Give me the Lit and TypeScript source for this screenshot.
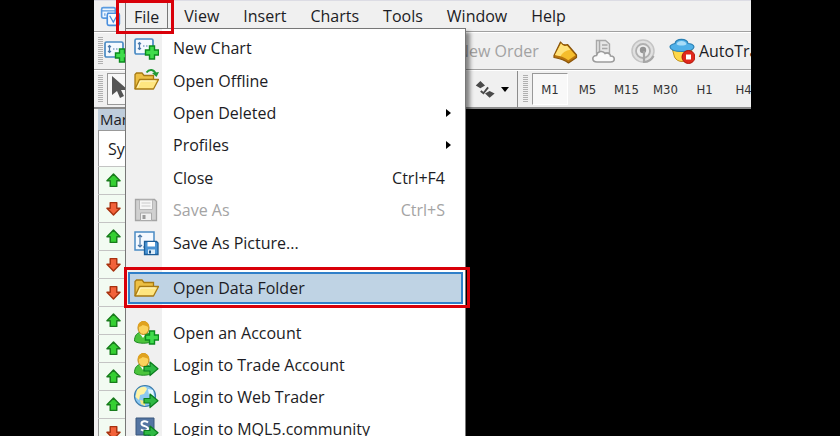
import { LitElement, html, svg, css, nothing } from "lit";
import { customElement } from "lit/decorators.js";
import { classMap } from "lit/directives/class-map.js";

const icon = (body: unknown, size = 26) =>
  html`<svg width=${size} height=${size} viewBox="0 0 26 26" aria-hidden="true">${body}</svg>`;

const plus = svg`<path d="M16.500 11h5v4h4v5h-4v4h-5v-4h-4v-5h4z" fill="#3fdc4c" stroke="#0b8a1e" stroke-width="1.400"/>`;
const arrow = svg`<path d="M11 14.500h6v-4.500l8 6.700-8 6.800v-4.500h-6z" fill="#2fb944" stroke="#0b7d1e" stroke-width="1.200" stroke-linejoin="round"/>`;
const user = svg`
  <path d="M1.500 21c0-5 2-9 8.500-9s9 4 9 9c-3 3-14.500 3-17.500 0z" fill="#4cc43c" stroke="#1f8a22"/>
  <path d="M6.500 13l3.500 5 3.500-5z" fill="#fff"/>
  <ellipse cx="10.500" cy="8" rx="5.500" ry="6.500" fill="#fbd25c" stroke="#bb8210"/>
  <path d="M5 8c-1.500-9 12.500-9 11 0-2-3-5.500-2-6.500-3-1 2-3.500 1-4.500 3z" fill="#e0a21f"/>`;
const folder = svg`
  <path d="M2 21V6.500l1.500-1.500H9l2 2.500h9.500V12" fill="#edc044" stroke="#a87a12" stroke-width="1.300"/>
  <path d="M2 21l4.500-9.500H25.500L20.500 21z" fill="#ffe680" stroke="#a87a12" stroke-width="1.300" stroke-linejoin="round"/>
  <path d="M4.500 19.500l3-6.500h15" fill="none" stroke="#fff6c8"/>`;

const icons: Record<string, unknown> = {
  newChart: svg`
    <rect x="2" y="4" width="18" height="15" rx="1.500" fill="#f4f9ff" stroke="#4a8bc4" stroke-width="1.700"/>
    <path d="M6.500 7.500v7M5 9l1.500-1.500L8 9M5 13l1.500 1.500L8 13M10 11h1.500M13 11h1.500" fill="none" stroke="#4a78a8" stroke-width="1.200"/>${plus}`,
  offline: svg`${folder}
    <path d="M13.500 4.500c3-4 7.500-3 9 1" fill="none" stroke="#219a35" stroke-width="2"/>
    <path d="M19 5l7-1-2.500 5z" fill="#219a35"/>`,
  folder,
  save: svg`
    <path d="M2.500 2.500h19l2 2v19h-21z" fill="#d0d0d0" stroke="#a4a4a4" stroke-width="1.300"/>
    <path d="M6.500 3h13v9.500h-13z" fill="#f6f6f6" stroke="#b8b8b8"/>
    <path d="M8.500 6h9M8.500 9h9" stroke="#cacaca"/>
    <path d="M7.500 16h11v7.500h-11z" fill="#f0f0f0" stroke="#aaa"/>
    <path d="M9.500 18h3v4h-3z" fill="#999"/>`,
  savePicture: svg`
    <path d="M2 2h19v18H2z" fill="#f4f9ff" stroke="#4a8bc4" stroke-width="1.500"/>
    <path d="M7 5v12M5 7l2-2 2 2M5 15l2 2 2-2M10 17h2" fill="none" stroke="#4a78a8" stroke-width="1.200"/>
    <path d="M11.500 11.500h12l1.500 1.500v11.500H11.500z" fill="#4a93d4" stroke="#1c5d97" stroke-width="1.300"/>
    <path d="M14.500 12h7.500v4.500h-7.500z" fill="#fff"/><path d="M15 19.500h7v4.500h-7z" fill="#dcecf8"/>
    <path d="M16 20.500h2v3h-2z" fill="#1c5387"/>`,
  account: svg`${user}${plus}`,
  login: svg`${user}${arrow}`,
  web: svg`
    <circle cx="12" cy="12" r="10.500" fill="#8cc8f2" stroke="#3c7cab" stroke-width="1.200"/>
    <path d="M4 6c4-4 9-4 10-1l-3 5-4 1-1 5-3.500-3z" fill="#fff3a4"/>
    <path d="M15 5l5 1 1 6-5-1z" fill="#e4f6ff"/><path d="M7 16l5 1v5l-4-2z" fill="#f4e98a"/>${arrow}`,
  community: svg`
    <path d="M3 2h18v17h-5l-4 4v-4H3z" fill="#5474a2" stroke="#3b567d"/>
    <path d="M15 6.500c-2-2-6.500-1.500-6.500 1.200 0 3 6.500 1.800 6.500 4.800 0 2.500-4.500 3-7 1" fill="none" stroke="#fff" stroke-width="2"/>${arrow}`,
  app: svg`
    <rect x="2" y="2" width="17" height="13" rx="2" fill="#eef6ff" stroke="#5b9be0" stroke-width="2"/>
    <path d="M2 6h17M6 9v3M10 8v4" stroke="#5b9be0" stroke-width="1.500"/>
    <rect x="9" y="9" width="15" height="15" rx="2" fill="#f7fbff" stroke="#4b8fdd" stroke-width="2"/>
    <path d="M12 12l4.500 8L21 12" fill="none" stroke="#4b8fdd" stroke-width="1.500"/>`,
  cursor: svg`<path d="M4 2v19l5-4 3 7 4-2-3-6h7z" fill="#555"/>`,
  book: svg`
    <path d="M2 17.500L8.500 4c2 3 4.500 3.500 7 2.500L24.500 17v2.500L16.500 25C13 22 8 20.500 2 19.500z" fill="#b8740e" stroke="#8a5508" stroke-width="1.200" stroke-linejoin="round"/>
    <path d="M3 17L9 5.500c2 2.500 4 3 6 2.200l8.500 9.600-7.200 5C13 19.500 9 18 3 17z" fill="#f5bd2c"/>
    <path d="M9 5.500c2 2.500 4 3 6 2.200l3.500 4c-5 .8-8.500 3-10 6.600L3 17z" fill="#ffe27a"/>`,
  server: svg`
    <path d="M5.500 2.500h9l4 3.500v9h-13z" fill="#e6e6e6" stroke="#a8a8a8" stroke-width="1.400"/>
    <path d="M8.500 3v10M11 7h5.500M11 10.500h5.500" stroke="#a8a8a8" stroke-width="1.500"/>
    <path d="M6 24c-5.500 0-5.500-6.500-.5-6.500 1-5 7-5 8.500-2 3-1.500 5.500.5 5.500 2.500 5 0 5 6 0 6z" fill="#fafafa" stroke="#9c9c9c" stroke-width="1.600"/>`,
  signal: svg`
    <circle cx="13" cy="13" r="11" fill="#e0e0e0" stroke="#c4c4c4" stroke-width="1.500"/>
    <circle cx="13" cy="13" r="7" fill="#ededed" stroke="#b0b0b0" stroke-width="1.800"/>
    <circle cx="13" cy="12" r="3.200" fill="#949494"/>
    <path d="M14 13v11c5 0 8-3 9.500-6" fill="none" stroke="#a6a6a6" stroke-width="2.200"/>`,
  auto: svg`
    <path d="M3 10l2.500 9c3 6 12 6 15 0l3-9z" fill="#ffd84a" stroke="#c0901a"/>
    <path d="M1 9c0-2 3-3 5-3.500C7 0 18 0 19 5.500c2 0 6 1 6 3.500-1 6-23 6-24 0z" fill="#4fb0e8" stroke="#2a80b4" stroke-width="1.200"/>
    <path d="M7.500 6c1-4 9-4 10 0-1 2-9 2-10 0z" fill="#a8ddf8"/>
    <circle cx="19.500" cy="19" r="6.500" fill="#e0281c" stroke="#b01408"/>
    <path d="M17 16.500h5v5h-5z" fill="#fff"/>`,
  nodes: svg`
    <path d="M1 8.500L7 2.500l6 6-6 3.500zM13 19l6-3.500 6.500 3.500-6.500 5.500z" fill="#4a4a4a"/>
    <path d="M7.500 15.500l3.500 3L17 11" fill="none" stroke="#4a4a4a" stroke-width="2.500"/>`,
  up: svg`<path d="M13 3l10 10.500h-5V22H8v-8.500H3z" fill="#35d032" stroke="#187c1c" stroke-width="2.200" stroke-linejoin="round"/>`,
  down: svg`<path d="M13 23L3 12.500h5V4h10v8.500h5z" fill="#f2623a" stroke="#a8320f" stroke-width="2.200" stroke-linejoin="round"/>`,
};

interface Entry {
  label: string;
  icon?: string;
  keys?: string;
  submenu?: boolean;
  disabled?: boolean;
  active?: boolean;
}

const groups: Entry[][] = [
  [
    { label: "New Chart", icon: "newChart" },
    { label: "Open Offline", icon: "offline" },
    { label: "Open Deleted", submenu: true },
    { label: "Profiles", submenu: true },
    { label: "Close", keys: "Ctrl+F4" },
    { label: "Save As", icon: "save", keys: "Ctrl+S", disabled: true },
    { label: "Save As Picture...", icon: "savePicture" },
  ],
  [{ label: "Open Data Folder", icon: "folder", active: true }],
  [
    { label: "Open an Account", icon: "account" },
    { label: "Login to Trade Account", icon: "login" },
    { label: "Login to Web Trader", icon: "web" },
    { label: "Login to MQL5.community", icon: "community" },
  ],
];

const menus = ["File", "View", "Insert", "Charts", "Tools", "Window", "Help"];
const periods = ["M1", "M5", "M15", "M30", "H1", "H4"];
const trends = ["up", "down", "up", "down", "down", "up", "up", "up", "up", "down"];

@customElement("app-root")
export class AppRoot extends LitElement {
  static styles = css`
    :host {
      display: block;
      height: 100vh;
      overflow: hidden;
      background: #000;
      font: 16px/24px "Open Sans", "Noto Sans", sans-serif;
      color: #1c1c24;
    }
    * { box-sizing: border-box; }
    button {
      font: inherit;
      color: inherit;
      background: none;
      border: 0;
      margin: 0;
      padding: 0;
      white-space: nowrap;
    }
    svg { display: block; flex: none; }
    .window {
      position: relative;
      height: 100%;
      margin: 0 89px 0 94px;
      overflow: hidden;
      display: flex;
      flex-direction: column;
    }
    .menubar {
      flex: none;
      display: flex;
      align-items: center;
      height: 32px;
      padding-left: 6px;
      background: #f0f0f0;
      border-top: 1px solid #dcdce4;
      border-bottom: 1px solid #a0a0a0;
    }
    .menus { display: flex; margin-left: 4px; }
    .menus button { height: 28px; padding: 0 12px; }
    .menus .open {
      padding: 0 8px;
      margin-right: 4px;
      border: 1px solid #777;
      border-bottom: 0;
    }
    .toolbar {
      flex: none;
      display: flex;
      align-items: center;
      height: 38px;
      padding-left: 4px;
      background: #f0f0f0;
      border-top: 1px solid #fff;
      border-bottom: 1px solid #a0a0a0;
    }
    .toolbar.last { height: 39px; border-bottom: 2px solid #8c8c8c; }
    .grip {
      flex: none;
      width: 5px;
      height: 28px;
      background: repeating-linear-gradient(#b0b0b0 0 1px, #f0f0f0 1px 2px);
    }
    .spring { flex: none; width: 354px; }
    .tools { display: flex; align-items: center; gap: 13px; }
    .tools button { display: flex; align-items: center; gap: 4px; }
    .order { color: #a2a2a2; }
    .nodes { display: flex; align-items: center; gap: 6px; margin-left: 18px; }
    .caret { border: 4px solid transparent; border-top: 5px solid #000; border-bottom: 0; }
    .split { flex: none; align-self: stretch; width: 1px; margin: 0 5px 0 8px; background: #8c8c8c; }
    .periods {
      display: flex;
      margin-left: 4px;
      font: 13px/18px "DejaVu Sans Condensed", "Open Sans", sans-serif;
      color: #333;
    }
    .periods button { flex: none; width: 39px; height: 32px; padding-top: 2px; }
    .periods .on {
      width: 36px;
      background: #f8f8f8;
      border: 1px solid #999;
      border-right-color: #fff;
      border-bottom-color: #fff;
    }
    .selected { width: 30px; height: 32px; margin-left: 4px; border: 1px solid #999; background: #f8f8f8; }
    .market {
      width: 40px;
      padding-left: 4px;
      background: #f0f0f0;
      flex: 1;
    }
    .caption { height: 21px; padding-left: 2px; background: #bfcddb; font-size: 15px; line-height: 21px; overflow: hidden; }
    table { border-collapse: collapse; width: 100%; background: #fff; border: 1px solid #999; }
    th { height: 36px; padding: 0 0 0 9px; text-align: left; font-weight: 400; }
    td { height: 28px; padding: 0 0 0 6px; border-top: 1px solid #c4c4c4; background: #f2fbf2; }
    .popup {
      position: absolute;
      left: 31px;
      top: 28px;
      width: 341px;
      padding: 3px 2px;
      border: 1px solid #777;
      background: linear-gradient(90deg, #f0f0f0 36px, #fff 36px);
      box-shadow: 4px 4px 4px rgba(0, 0, 0, 0.45);
    }
    .group { display: grid; grid-auto-rows: 1fr; }
    .group.long { height: 227px; }
    .group + .group { margin-top: 13px; }
    .item {
      display: flex;
      align-items: center;
      min-height: 32px;
      width: 100%;
      padding: 0 18px 0 5px;
      text-align: left;
    }
    .pic { flex: none; width: 40px; }
    .label { flex: 1; }
    .item:disabled { color: #a4a4a4; }
    .item.active {
      padding: 0 16px 0 3px;
      background: #bfd3e4;
      border: 2px solid #2f7fc9;
    }
    .sub { border: 4px solid transparent; border-left: 5px solid #000; border-right: 0; margin-right: -6px; }
    .mark { position: absolute; border: 3px solid #d90009; pointer-events: none; }
    .mark.file { left: 22px; top: 0; width: 58px; height: 34px; }
    .mark.data { left: 30px; top: 267px; width: 346px; height: 41px; }
  `;

  private entry(e: Entry) {
    return html`<button
      class=${classMap({ item: true, active: !!e.active })}
      role="menuitem"
      ?disabled=${e.disabled}
    >
      <span class="pic">${e.icon ? icon(icons[e.icon]) : nothing}</span>
      <span class="label">${e.label}</span>
      ${e.keys ? html`<span>${e.keys}</span>` : nothing}
      ${e.submenu ? html`<span class="sub"></span>` : nothing}
    </button>`;
  }

  render() {
    return html`
      <main class="window">
        <nav class="menubar" aria-label="Main menu">
          ${icon(icons.app, 21)}
          <div class="menus">
            ${menus.map((m) => html`<button class=${classMap({ open: m === "File" })}>${m}</button>`)}
          </div>
        </nav>
        <div class="toolbar">
          <span class="grip"></span>
          <button class="spring" aria-label="New chart">${icon(icons.newChart)}</button>
          <div class="tools">
            <button class="order" disabled>New Order</button>
            <button aria-label="MetaEditor">${icon(icons.book)}</button>
            <button aria-label="Server" disabled>${icon(icons.server)}</button>
            <button aria-label="Signals" disabled>${icon(icons.signal)}</button>
            <button>${icon(icons.auto)}AutoTrading</button>
          </div>
        </div>
        <div class="toolbar last">
          <span class="grip"></span>
          <button class="spring" aria-label="Cursor"><div class="selected">${icon(icons.cursor)}</div></button>
          <button class="nodes" aria-label="Shapes">${icon(icons.nodes, 20)}<span class="caret"></span></button>
          <span class="split"></span>
          <span class="grip"></span>
          <div class="periods">
            ${periods.map((p) => html`<button class=${classMap({ on: p === "M1" })}>${p}</button>`)}
          </div>
        </div>
        <section class="market" aria-label="Market Watch">
          <div class="caption">Market Watch</div>
          <table>
            <tr><th>Symbol</th></tr>
            ${trends.map((t) => html`<tr><td>${icon(icons[t], 17)}</td></tr>`)}
          </table>
        </section>
        <div class="popup" role="menu">
          ${groups.map(
            (g) => html`<div class=${classMap({ group: true, long: g.length > 4 })}>${g.map((e) => this.entry(e))}</div>`
          )}
        </div>
        <div class="mark file"></div>
        <div class="mark data"></div>
      </main>
    `;
  }
}
